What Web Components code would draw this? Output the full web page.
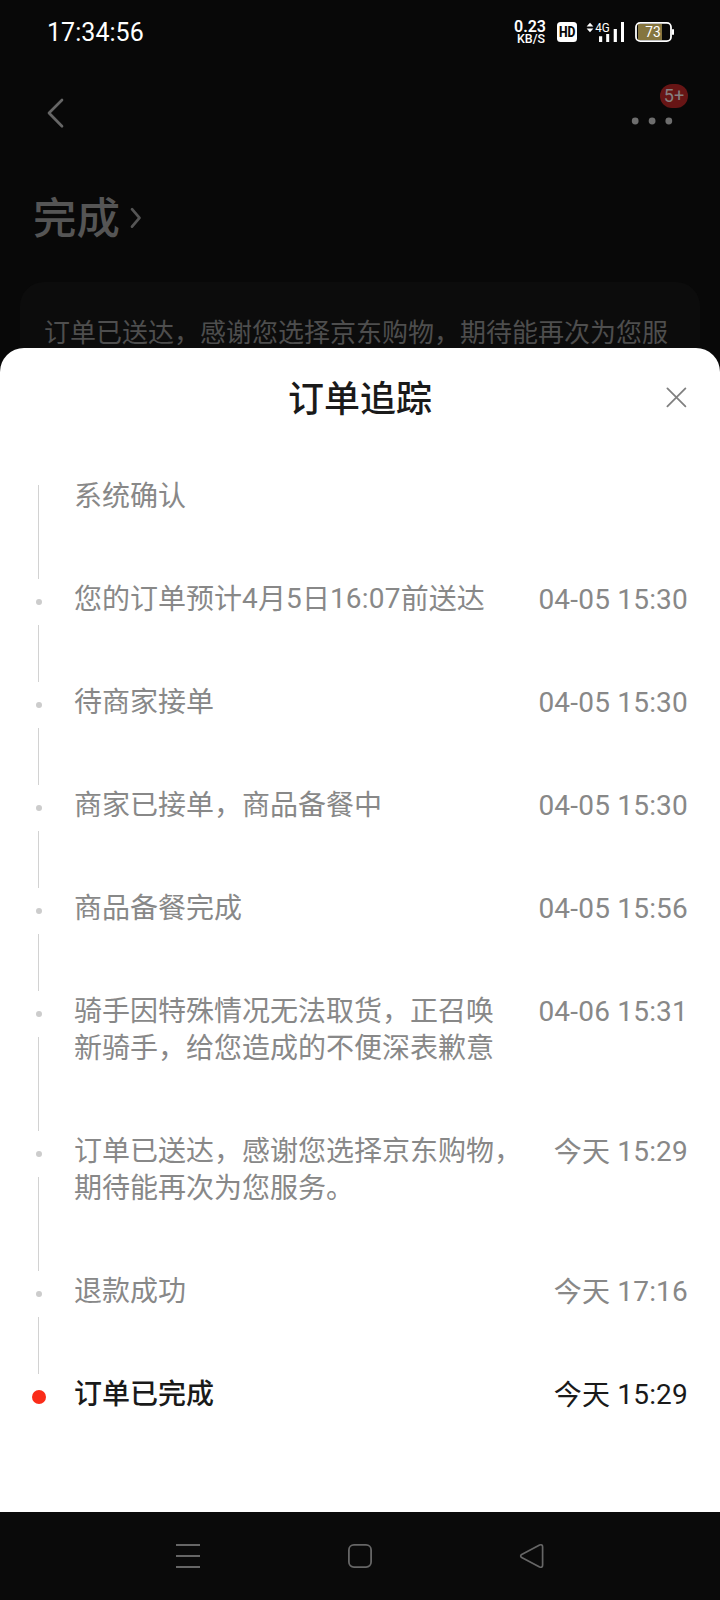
<!DOCTYPE html>
<html lang="zh-CN">
<head>
<meta charset="utf-8">
<title>订单追踪</title>
<style>
html,body{margin:0;padding:0;background:#080808}
body{width:720px;height:1600px;overflow:hidden;font-family:Roboto,"Noto Sans CJK SC",sans-serif}
</style>
</head>
<body>
<order-screen></order-screen>
<script>
const define = (name, html) => {
  const t = document.createElement('template');
  t.innerHTML = html;
  customElements.define(name, class extends HTMLElement {
    constructor() {
      super();
      this.attachShadow({mode: 'open'}).append(t.content.cloneNode(true));
    }
  });
};

define('status-bar', `
<style>
:host{display:flex;height:64px;box-sizing:border-box;padding:0 45px 0 47px;align-items:center;justify-content:space-between;color:#fff}
.time{font-size:25px;line-height:30px;padding-top:2px;letter-spacing:.05px}
svg{display:block}
</style>
<div class="time">17:34:56</div>
<svg width="162" height="30" viewBox="513 17 162 30" fill="#fff" font-family="Roboto">
  <text x="514" y="32" font-size="16" font-weight="600" textLength="32" lengthAdjust="spacingAndGlyphs">0.23</text>
  <text x="517" y="43.2" font-size="12.5" font-weight="500" textLength="28" lengthAdjust="spacingAndGlyphs">KB/S</text>
  <rect x="557" y="22" width="20" height="20" rx="3.5"/>
  <text x="559" y="37.3" font-size="15" font-weight="800" fill="#080808" textLength="16.5" lengthAdjust="spacingAndGlyphs">HD</text>
  <path d="M586.6 26.4l3.4-3.7 3.4 3.7zM586.6 28.6l3.4 3.7 3.4-3.7z"/>
  <text x="595.3" y="32" font-size="13.5" textLength="14.5" lengthAdjust="spacingAndGlyphs">4G</text>
  <path d="M599 36.2h3.2V42H599zM606.2 34h3v8h-3zM613.7 29h3.2v13h-3.2zM621 22h3v20h-3z"/>
  <path d="M638 24h24v16h-24z" fill="#85753f"/>
  <rect x="636" y="22.9" width="35" height="18.2" rx="4.2" fill="none" stroke="#fff" stroke-width="1.8"/>
  <rect x="672" y="29" width="2" height="6" rx="1"/>
  <text x="645.3" y="36.8" font-size="14.5" textLength="15.5" lengthAdjust="spacingAndGlyphs">73</text>
</svg>`);

define('top-nav', `
<style>
:host{display:flex;height:98px;justify-content:space-between;padding:0 32px 0 46px}
svg{display:block;overflow:visible}
.back{margin-top:32px}
.more{position:relative;margin-top:53px}
.badge{position:absolute;left:27px;top:-33px;width:28px;height:24px;border-radius:12px;background:#671515;color:#858080;font-size:18px;line-height:24px;text-align:center}
</style>
<svg class="back" width="20" height="34" fill="none" stroke="#666" stroke-width="2.7" stroke-linecap="round" stroke-linejoin="round"><path d="M16 4L3 17 16 30.3"/></svg>
<div class="more">
  <svg width="55" height="12" fill="#6e6e6e"><circle cx="2.2" cy="4" r="3.4"/><circle cx="19.1" cy="4" r="3.4"/><circle cx="35.8" cy="4" r="3.4"/></svg>
  <div class="badge">5+</div>
</div>`);

define('order-state', `
<style>
:host{display:flex;height:120px;padding-left:33px;color:#555}
.t{margin-top:22px;font:500 43.5px/64px "Noto Sans CJK SC",sans-serif}
svg{display:block;margin:44px 0 0 10px}
</style>
<div class="t"><slot></slot></div>
<svg width="14" height="24" fill="none" stroke="#555" stroke-width="2.7" stroke-linecap="round" stroke-linejoin="round"><path d="M2 3.2l7.5 8.6L2 20.6"/></svg>`);

define('notice-card', `
<style>
:host{display:block;height:90px;margin:0 20px;box-sizing:border-box;padding:29px 0 0 24px;border-radius:24px 24px 0 0;background:#0c0c0c;color:#4e4e4e;font:26px/40px "Noto Sans CJK SC",sans-serif;white-space:nowrap;overflow:hidden}
</style><slot></slot>`);

define('sheet-header', `
<style>
:host{display:grid;grid-template-columns:1fr auto 1fr;height:129px;align-items:start;color:#1a1a1a;padding-right:30px;padding-left:30px}
.t{grid-column:2;margin-top:21px;font:500 36px/54px "Noto Sans CJK SC",sans-serif}
svg{display:block;justify-self:end;margin:36px 0 0}
</style>
<div class="t"><slot></slot></div>
<svg width="28" height="28" fill="none" stroke="#808080" stroke-width="1.8" stroke-linecap="round"><path d="M5.4 4.4l18 18M23.4 4.4l-18 18"/></svg>`);

define('track-step', `
<style>
:host{display:grid;grid-template-columns:10px 454px 1fr;column-gap:0;padding:0 32px 0 34px;color:#888;font-size:28px;line-height:37px}
.rail{display:flex;flex-direction:column;align-items:center;height:100%}
.dot{flex:none;width:6px;height:6px;margin:19px 0 20px;border-radius:50%;background:#ccc}
.line{flex:1;width:1px;margin-right:1px;margin-bottom:1px;background:#d2d2d2}
.text{padding:1px 0 65px 30px;white-space:nowrap}
.time{text-align:right;white-space:nowrap;padding-top:1px;letter-spacing:.2px}
:host([first]) .dot{display:none}
:host([first]) .line{margin-top:8px}
:host([current]){color:#1a1a1a}
:host([current]) .line{display:none}
:host([current]) .dot{width:14px;height:14px;margin:15px -2px 0;background:#fa2c19}
:host([current]) .text{font-weight:500}
</style>
<div class="rail"><span class="dot"></span><span class="line"></span></div>
<div class="text"><slot></slot></div>
<div class="time"><slot name="time"></slot></div>`);

define('track-sheet', `
<style>
:host{display:block;position:relative;height:1164px;margin-top:-24px;border-radius:24px 24px 0 0;background:#fff;overflow:hidden}
</style><slot></slot>`);

define('system-nav', `
<style>
:host{display:flex;height:88px;align-items:center;justify-content:center;gap:144px;background:#0a0a0a}
svg{display:block}
</style>
<svg width="28" height="28" fill="none" stroke="#666" stroke-width="2"><path d="M2 3h24M2 14h24M2 25h24"/></svg>
<svg width="28" height="28" fill="none" stroke="#666" stroke-width="1.8"><rect x="2.9" y="2.9" width="22.2" height="22.2" rx="5"/></svg>
<svg width="28" height="28" fill="none" stroke="#666" stroke-width="1.7" stroke-linejoin="round"><path d="M3.7 12.4L21.6 3q3-1 3 2v18q0 3-3 2L3.7 15.6q-2-1.6 0-3.2z"/></svg>`);

define('order-screen', `
<style>
:host{display:flex;flex-direction:column;width:720px;height:1600px;background:#080808}
.page{height:372px;overflow:hidden}
.num{line-height:1;vertical-align:1px;letter-spacing:.2px}
.day{line-height:1;vertical-align:-1px}
</style>
<div class="page">
  <status-bar></status-bar>
  <top-nav></top-nav>
  <order-state>完成</order-state>
  <notice-card>订单已送达，感谢您选择京东购物，期待能再次为您服</notice-card>
</div>
<track-sheet>
  <sheet-header>订单追踪</sheet-header>
  <track-step first>系统确认</track-step>
  <track-step>您的订单预计<span class="num">4</span>月<span class="num">5</span>日<span class="num">16:07</span>前送达<span slot="time">04-05 15:30</span></track-step>
  <track-step>待商家接单<span slot="time">04-05 15:30</span></track-step>
  <track-step>商家已接单，商品备餐中<span slot="time">04-05 15:30</span></track-step>
  <track-step>商品备餐完成<span slot="time">04-05 15:56</span></track-step>
  <track-step>骑手因特殊情况无法取货，正召唤<br>新骑手，给您造成的不便深表歉意<span slot="time">04-06 15:31</span></track-step>
  <track-step>订单已送达，感谢您选择京东购物，<br>期待能再次为您服务。<span slot="time"><span class="day">今天</span> 15:29</span></track-step>
  <track-step>退款成功<span slot="time"><span class="day">今天</span> 17:16</span></track-step>
  <track-step current>订单已完成<span slot="time"><span class="day">今天</span> 15:29</span></track-step>
</track-sheet>
<system-nav></system-nav>`);
</script>
</body>
</html>
